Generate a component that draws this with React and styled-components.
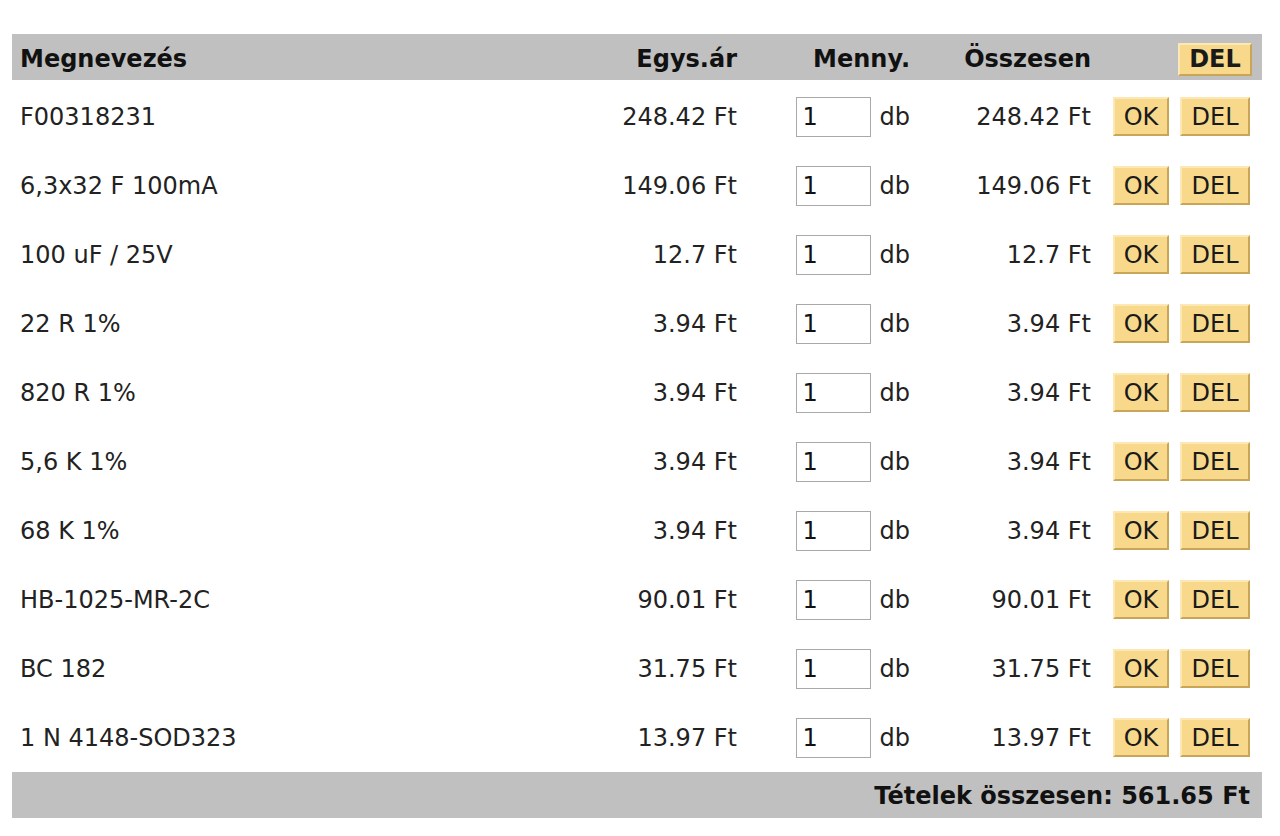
import React from "react";
import styled, { createGlobalStyle } from "styled-components";

const items = [
	{ name: "F00318231", price: "248.42 Ft" },
	{ name: "6,3x32 F 100mA", price: "149.06 Ft" },
	{ name: "100 uF / 25V", price: "12.7 Ft" },
	{ name: "22 R 1%", price: "3.94 Ft" },
	{ name: "820 R 1%", price: "3.94 Ft" },
	{ name: "5,6 K 1%", price: "3.94 Ft" },
	{ name: "68 K 1%", price: "3.94 Ft" },
	{ name: "HB-1025-MR-2C", price: "90.01 Ft" },
	{ name: "BC 182", price: "31.75 Ft" },
	{ name: "1 N 4148-SOD323", price: "13.97 Ft" },
];

function App() {
	return (
		<>
			<GlobalStyle />
			<Cart>
				<HeadRow>
					<Cell>Megnevezés</Cell>
					<Cell $right>Egys.ár</Cell>
					<Cell $right>Menny.</Cell>
					<Cell $right>Összesen</Cell>
					<Actions $head>
						<Button $bold $wide>DEL</Button>
					</Actions>
				</HeadRow>
				{items.map((item) => (
					<Row key={item.name}>
						<Cell>{item.name}</Cell>
						<Cell $right>{item.price}</Cell>
						<Qty>
							<QtyInput defaultValue="1" />
							<span>db</span>
						</Qty>
						<Cell $right>{item.price}</Cell>
						<Actions>
							<Button>OK</Button>
							<Button $wide>DEL</Button>
						</Actions>
					</Row>
				))}
				<Footer>Tételek összesen: 561.65 Ft</Footer>
			</Cart>
		</>
	);
}

export default App;

const GlobalStyle = createGlobalStyle`
	body {
		margin: 0;
		background: #fff;
		font-family: "DejaVu Sans", Verdana, sans-serif;
		color: #222;
	}
`;

const Cart = styled.div`
	display: flex;
	flex-direction: column;
	margin: 34px 18px 0 12px;
	font-size: 24px;
`;

const Grid = styled.div`
	box-sizing: border-box;
	display: grid;
	grid-template-columns: 1fr 160px 173px 181px 163px;
	align-items: center;
	padding: 4px 8px 0;
`;

const HeadRow = styled(Grid)`
	height: 46px;
	background: #c0c0c0;
	font-weight: bold;
	color: #111;
`;

const Row = styled(Grid)`
	height: 69px;
`;

const Cell = styled.div`
	text-align: ${(p) => (p.$right ? "right" : "left")};
	white-space: nowrap;
`;

const Qty = styled.div`
	display: flex;
	justify-content: flex-end;
	align-items: center;
	gap: 9px;
`;

const QtyInput = styled.input`
	box-sizing: border-box;
	width: 75px;
	height: 40px;
	border: 1px solid #a9a9a9;
	padding: 0 6px;
	font: inherit;
	color: #111;
`;

const Actions = styled.div`
	display: flex;
	justify-content: flex-end;
	gap: 11px;
	padding-right: ${(p) => (p.$head ? "2px" : "4px")};
`;

const Button = styled.button`
	box-sizing: border-box;
	width: ${(p) => (p.$wide ? (p.$bold ? "74px" : "70px") : "56px")};
	height: ${(p) => (p.$bold ? "33px" : "39px")};
	padding: 0;
	background: #f8d98c;
	border: 2px solid;
	border-color: #fbe8b4 #c9a557 #c9a557 #fbe8b4;
	font: inherit;
	font-size: 24px;
	font-weight: ${(p) => (p.$bold ? "bold" : "normal")};
	color: #1a1a1a;
`;

const Footer = styled.div`
	box-sizing: border-box;
	margin-top: 2px;
	height: 46px;
	display: flex;
	align-items: center;
	justify-content: flex-end;
	padding: 2px 12px 0 0;
	background: #c0c0c0;
	font-weight: bold;
	color: #111;
`;
